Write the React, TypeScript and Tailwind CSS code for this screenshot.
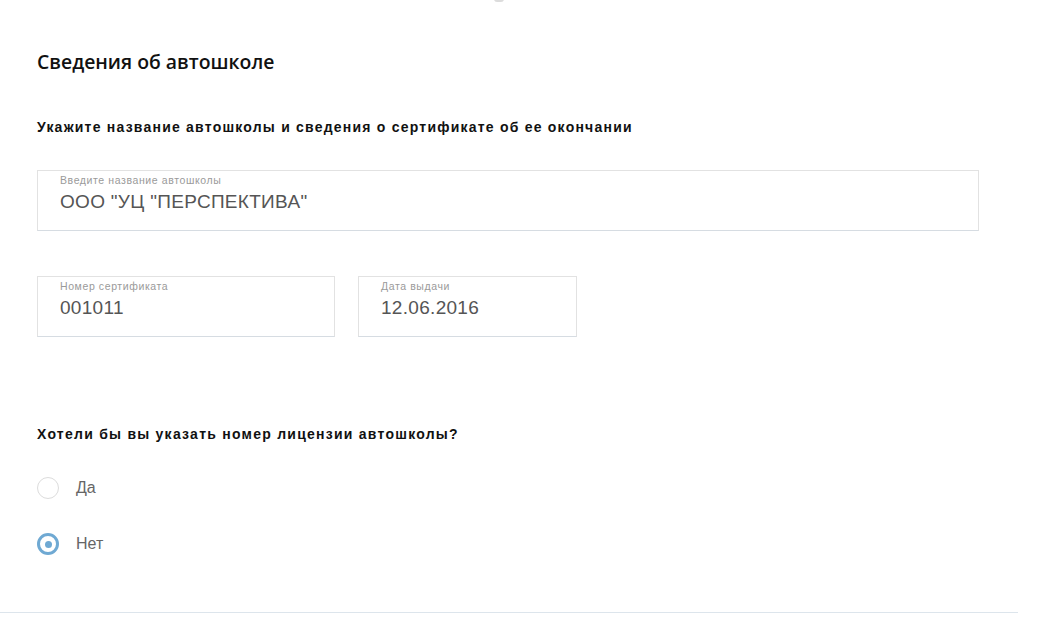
import React from "react";

const Field = ({ label, value, className }: { label: string; value: string; className: string }) => (
  <div
    className={`h-[61px] border border-[#e2e2e2] border-b-[#d6dce2] bg-white pl-[22px] pt-[3px] ${className}`}
  >
    <div className="text-[10.5px] leading-[13px] tracking-[0.6px] text-[#9a9a9a]">{label}</div>
    <div className="mt-[3px] text-[19px] leading-[24px] tracking-[0.3px] text-[#555]">{value}</div>
  </div>
);

const Radio = ({ label, checked }: { label: string; checked?: boolean }) => (
  <div className="flex items-center">
    {checked ? (
      <span className="flex h-[22px] w-[22px] items-center justify-center rounded-full border-[3px] border-[#6fa9d3]">
        <span className="h-[7px] w-[7px] rounded-full bg-[#6fa9d3]" />
      </span>
    ) : (
      <span className="h-[22px] w-[22px] rounded-full border border-[#dcdcdc]" />
    )}
    <span className="ml-[17px] text-[16px] leading-[20px] text-[#666]">{label}</span>
  </div>
);

export default function App() {
  return (
    <div
      className="relative h-[630px] w-[1043px] overflow-hidden bg-white"
      style={{ fontFamily: '"Liberation Sans", Arial, sans-serif' }}
    >
      <div className="absolute left-[494px] top-[-4px] h-[6px] w-[10px] rounded-full bg-[#dcdcdc]" />
      <div className="pl-[37px] pt-[49px]">
        <h1
          className="text-[19.4px] font-semibold leading-[26px] text-[#111]"
          style={{ fontFamily: '"Open Sans", "DejaVu Sans", sans-serif' }}
        >
          Сведения об автошколе
        </h1>
        <p className="mt-[44px] text-[14px] font-bold leading-[17px] tracking-[1.22px] text-[#111]">
          Укажите название автошколы и сведения о сертификате об ее окончании
        </p>
        <Field
          className="mt-[34px] w-[942px]"
          label="Введите название автошколы"
          value={'ООО "УЦ "ПЕРСПЕКТИВА"'}
        />
        <div className="mt-[45px] flex gap-[23px]">
          <Field className="w-[298px]" label="Номер сертификата" value="001011" />
          <Field className="w-[219px]" label="Дата выдачи" value="12.06.2016" />
        </div>
        <p className="mt-[89px] text-[14px] font-bold leading-[17px] tracking-[1.25px] text-[#111]">
          Хотели бы вы указать номер лицензии автошколы?
        </p>
        <div className="mt-[34px] flex flex-col gap-[34px]">
          <Radio label="Да" />
          <Radio label="Нет" checked />
        </div>
      </div>
      <div className="mt-[57px] h-px w-[1018px] bg-[#dde5ec]" />
    </div>
  );
}
